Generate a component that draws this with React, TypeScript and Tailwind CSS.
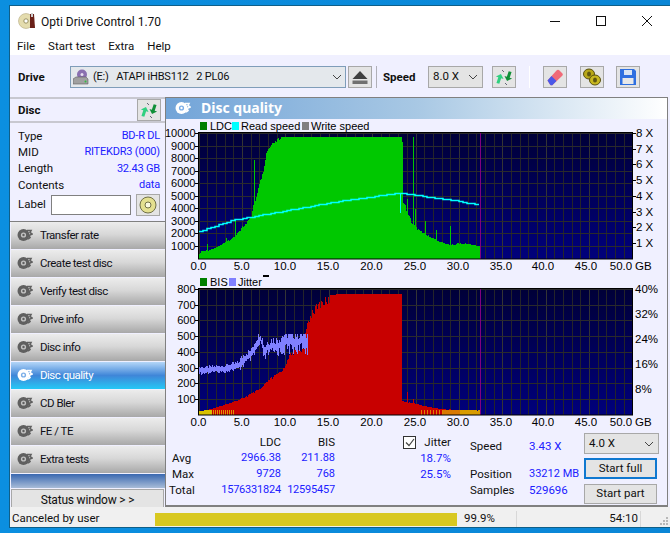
import type { ReactNode } from "react";

const PX_PER_GB = 8.68;
const X0 = 32.5;
const COLS = 282;

// fake-but-stable noise so the bars look like the measured data
const noise = (i: number) => {
  const s = Math.sin(i * 12.9898) * 43758.5453;
  return s - Math.floor(s);
};

const interp = (pts: number[][], x: number) => {
  for (let k = 1; k < pts.length; k++) {
    if (x <= pts[k][0]) {
      const [x0, y0] = pts[k - 1];
      const [x1, y1] = pts[k];
      return y0 + ((y1 - y0) * (x - x0)) / (x1 - x0 || 1);
    }
  }
  return pts[pts.length - 1][1];
};

const ldcEnv = [
  [0, 400], [0.3, 700], [1, 700], [2, 1000], [3, 1400], [4, 1800], [4.5, 2300], [5, 2700], [5.5, 3000],
  [6, 3500], [6.2, 4300], [6.5, 4800], [7, 6300], [7.4, 7000], [7.7, 8500], [8, 8900], [8.5, 9300], [9, 9600],
  [9.5, 9728], [23.3, 9728], [23.35, 5200], [24, 3800], [24.5, 3000], [25, 2600], [26, 2100], [27, 1700],
  [28, 1350], [29, 1200], [30, 1300], [31, 1250], [32, 1100], [32.45, 1050],
];
const ldcSpikes: Record<number, number> = { 55: 7900, 203: 9300, 214: 9700, 216: 4000, 226: 3000, 237: 2300, 251: 2600, 208: 4800, 8: 1200, 36: 3100, 27: 1700 };

const bisEnv = [
  [0, 25], [1, 35], [2, 50], [3, 70], [4, 90], [5, 110], [6, 140], [7, 170], [8, 230], [9, 270], [9.8, 310],
  [10.2, 380], [11, 420], [12, 440], [12.4, 600], [13, 680], [14, 740], [15, 760], [16, 768], [23.3, 768],
  [23.35, 90], [24, 85], [25, 72], [26, 60], [27, 46], [28, 38], [30, 33], [32.45, 30],
];

const speedEnv = [
  [0, 231], [1.5, 226.6], [3.8, 220], [9.6, 211], [15.3, 202], [21.1, 195], [23, 192.7], [25, 195], [30, 201], [32.3, 205],
];

const jitterEnv = [
  [0, 370], [3, 368], [4.5, 365], [5.2, 358], [6, 354], [6.5, 345], [7, 337], [7.5, 352], [8, 346], [9, 345], [10, 341], [12.5, 341],
];

const xLabels: [string, number][] = [
  ["0.0", 32.5], ["5.0", 75.7], ["10.0", 119], ["15.0", 162], ["20.0", 205.5], ["25.0", 249], ["30.0", 292],
  ["35.0", 335], ["40.0", 377], ["45.0", 420], ["50.0", 455],
];

function Plot({ hStep, hCount, children }: { hStep: number; hCount: number; children: ReactNode }) {
  const id = `sky${hCount}`;
  return (
    <>
      <defs>
        <linearGradient id={id} x1="0" y1="0" x2="0" y2="1">
          <stop offset="0" stopColor="#000038" />
          <stop offset="1" stopColor="#00007c" />
        </linearGradient>
      </defs>
      <rect x={X0} y={14} width={434} height={126} fill={`url(#${id})`} />
      {Array.from({ length: 50 }).map((_, i) => (
        <path key={i} d={`M${Math.round(X0 + i * PX_PER_GB) + 0.5} 14V140`} stroke={i % 5 === 0 ? "#343434" : "#24242a"} />
      ))}
      {Array.from({ length: hCount }).map((_, i) => (
        <path key={i} d={`M${X0} ${Math.round(14 + i * hStep) + 0.5}H466`} stroke="#2a2a2c" />
      ))}
      {children}
      <path d={`M${Math.round(X0 + 32.45 * PX_PER_GB) + 0.5} 14V140`} stroke="#800080" />
      <rect x={X0} y={13.5} width={434} height={126.5} fill="none" stroke="#000" />
      {xLabels.map(([t, x]) => (
        <text key={t} x={x} y={151} textAnchor="middle" fontSize={11.5}>{t}</text>
      ))}
      <text x={469} y={151} fontSize={11.5}>GB</text>
    </>
  );
}

function LdcChart() {
  const bars = Array.from({ length: COLS }).map((_, i) => {
    const gb = i / PX_PER_GB;
    let v = interp(ldcEnv, gb);
    if (v < 9700) v *= 1 - noise(i) * (gb > 6 && gb < 10 ? 0.03 : 0.09);
    if (ldcSpikes[i]) v = ldcSpikes[i];
    return `M${33 + i + 0.5} 140V${Math.round(140 - v * 0.01255)}`;
  }).join("");
  let speed = "";
  for (let i = 0; i < COLS - 2; i += 4) {
    const y = Math.round(interp(speedEnv, i / PX_PER_GB)) - 119 + 0.5;
    speed += `${i === 0 ? "M" : "V"}${i === 0 ? `33 ${y}` : y}H${33 + i + 4}`;
  }
  return (
    <svg width={502} height={156} className="block overflow-visible font-['Liberation_Sans',sans-serif]">
      <rect x={34} y={3} width={7} height={8} fill="#008000" />
      <text x={44} y={11} fontSize={11}>LDC</text>
      <rect x={66} y={3} width={7} height={8} fill="#00ffff" />
      <text x={75} y={11} fontSize={11}>Read speed</text>
      <rect x={136} y={3} width={7} height={8} fill="#808080" />
      <text x={145} y={11} fontSize={11}>Write speed</text>
      <Plot hStep={12.55} hCount={10}>
        <path d={bars} stroke="#00c800" />
        <path d={speed} stroke="#00ffff" strokeWidth={1.5} fill="none" />
        <path d="M234.5 74V94" stroke="#00ffff" />
      </Plot>
      {[10000, 9000, 8000, 7000, 6000, 5000, 4000, 3000, 2000, 1000].map((v) => {
        const y = 14 + (10000 - v) * 0.01255;
        return (
          <g key={v}>
            <path d={`M29 ${Math.round(y) + 0.5}H33`} stroke="#000" />
            <text x={29.5} y={y + 4} textAnchor="end" fontSize={11}>{v}</text>
          </g>
        );
      })}
      {[8, 7, 6, 5, 4, 3, 2, 1].map((v, i) => {
        const y = 14 + i * 15.72;
        return (
          <g key={v}>
            <path d={`M466 ${Math.round(y) + 0.5}H470`} stroke="#000" />
            <text x={470} y={y + 4} fontSize={11.5}>{v} X</text>
          </g>
        );
      })}
    </svg>
  );
}

function BisChart() {
  const bars: ReactNode[] = [];
  let red = "";
  for (let i = 0; i < COLS; i++) {
    const gb = i / PX_PER_GB;
    let v = interp(bisEnv, gb);
    if (v < 760) v *= 1 - noise(i + 7) * 0.08;
    if (i === 208) v = 145;
    if (i === 214) v = 100;
    const h = Math.round(v * 0.1573);
    red += `M${33 + i + 0.5} 140V${140 - h}`;
    let low = "";
    if (gb < 1.4) low = "#d8c000";
    else if (gb < 4 && i % 2 === 0) low = "#e09000";
    else if (gb > 25.5 && gb < 28 && i % 3 === 0) low = "#e08000";
    else if (gb >= 28 && gb < 30) low = "#d87800";
    else if (gb >= 30) low = "#d89c00";
    if (low) {
      const lh = Math.min(h, 5);
      bars.push(<path key={i} d={`M${33 + i + 0.5} 140V${140 - lh}`} stroke={low} />);
    }
  }
  let jitter = "";
  for (let i = 0; i < 109; i++) {
    const gb = i / PX_PER_GB;
    const c = interp(jitterEnv, gb) - 275;
    const spread = gb < 4.5 ? 3 : gb < 6 ? 6 : gb < 9 ? 9 : 12;
    const top = Math.max(c - 1 - noise(i + 3) * spread, 59);
    const bot = c + 1 + noise(i + 11) * spread;
    jitter += `M${33 + i + 0.5} ${Math.round(top)}V${Math.round(bot) + 1}`;
  }
  return (
    <svg width={502} height={155} className="block overflow-visible font-['Liberation_Sans',sans-serif]">
      <rect x={97} y={0} width={6} height={2} fill="#000" />
      <rect x={34} y={3} width={7} height={8} fill="#008000" />
      <text x={44} y={11} fontSize={11}>BIS</text>
      <rect x={63} y={3} width={7} height={8} fill="#8080ff" />
      <text x={72} y={11} fontSize={11}>Jitter</text>
      <Plot hStep={15.72} hCount={8}>
        <path d={red} stroke="#c80000" />
        {bars}
        <path d={jitter} stroke="#8080ff" />
      </Plot>
      {[800, 700, 600, 500, 400, 300, 200, 100].map((v) => {
        const y = 14 + (800 - v) * 0.1573;
        return (
          <g key={v}>
            <path d={`M29 ${Math.round(y) + 0.5}H33`} stroke="#000" />
            <text x={29.5} y={y + 4} textAnchor="end" fontSize={11}>{v}</text>
          </g>
        );
      })}
      {["40%", "32%", "24%", "16%", "8%"].map((t, i) => (
        <text key={t} x={469} y={18 + i * 25} fontSize={11.5}>{t}</text>
      ))}
    </svg>
  );
}

function DiscIcon({ light }: { light?: boolean }) {
  const c = light ? "#ffffff" : "#606060";
  const hole = light ? "#7aaee8" : "#c4c4c4";
  return (
    <svg width="16" height="14" viewBox="0 0 16 14">
      <circle cx="6.500" cy="7" r="6" fill={c} />
      <circle cx="6.500" cy="7" r="2.600" fill={hole} />
      <circle cx="6.500" cy="7" r="1.200" fill={c} />
      <path d="M10 2.500h4l-1 2 2 1.500-3 1.500 1 2-2 1.500" fill="none" stroke={c} strokeWidth="1.600" />
    </svg>
  );
}

function RefreshIcon() {
  return (
    <svg width="18" height="17" viewBox="0 0 18 17">
      <g transform="rotate(18 9 8.500)">
        <path d="M1 10l4-4 4 4H6.500v6h-3v-6z" fill="#30d080" />
        <path d="M17 7l-4 4-4-4h2.500V1h3v6z" fill="#109038" />
      </g>
      <path d="M7 1l2 2M10 14l2 2" stroke="#667" strokeWidth="1" />
    </svg>
  );
}

function ToolButton({ children, className = "" }: { children: ReactNode; className?: string }) {
  return (
    <div className={`flex h-[22px] w-[24px] shrink-0 items-center justify-center border border-[#a8a8a8] bg-[#e4e4e4] ${className}`}>
      {children}
    </div>
  );
}

function Chevron() {
  return (
    <svg width="10" height="6" viewBox="0 0 10 6" className="shrink-0">
      <path d="M1 1l4 4 4-4" fill="none" stroke="#444" />
    </svg>
  );
}

const sideButtons = ["Transfer rate", "Create test disc", "Verify test disc", "Drive info", "Disc info", "Disc quality", "CD Bler", "FE / TE", "Extra tests"];

function DiscRow({ label, value }: { label: string; value: string }) {
  return (
    <div className="flex h-[16.400px] items-center justify-between pl-2 pr-[5px]">
      <span>{label}</span>
      <span className="text-[11px] tracking-[-0.2px] text-[#2020ff]">{value}</span>
    </div>
  );
}

export default function App() {
  return (
    <div className="h-[533px] w-[670px] overflow-hidden bg-[linear-gradient(90deg,#0b8fe0,#0a86d6)] pl-[9px] pt-[5px] font-['Roboto',sans-serif] text-[11.500px] text-[#101010]">
      <div className="flex h-[523px] w-[661px] flex-col border border-r-0 border-[#0f5f88] bg-[#f0f0ff]">
        {/* title + menu */}
        <div className="bg-white">
          <div className="flex h-[29px] items-start justify-between">
            <div className="flex h-[29px] items-center gap-[5px] pl-[8px] pt-[1px] text-[12px]">
              <svg width="18" height="18" viewBox="0 0 18 18">
                <circle cx="8" cy="9" r="7.500" fill="#e4dcae" stroke="#a89c70" strokeWidth=".5" />
                <circle cx="8" cy="9" r="2.200" fill="#fff" stroke="#99905f" />
                <path d="M12 2h4l1 14h-5z" fill="#6a2018" />
                <path d="M13 1h2v4h-2z" fill="#cfcfcf" />
              </svg>
              <span className="pt-[2px]">Opti Drive Control 1.70</span>
            </div>
            <div className="flex">
              <div className="flex h-[29px] w-[46px] items-center justify-center">
                <svg width="10" height="10" viewBox="0 0 10 10"><path d="M0 5.500H10" stroke="#111" /></svg>
              </div>
              <div className="flex h-[29px] w-[46px] items-center justify-center">
                <svg width="10" height="10" viewBox="0 0 10 10"><rect x=".5" y=".5" width="9" height="9" fill="none" stroke="#111" /></svg>
              </div>
              <div className="flex h-[29px] w-[46px] items-center justify-center">
                <svg width="10" height="10" viewBox="0 0 10 10"><path d="M0 0L10 10M10 0L0 10" stroke="#111" /></svg>
              </div>
            </div>
          </div>
          <div className="flex h-[20px] items-center gap-[13px] pl-[7px] pt-[3px] text-[11.500px]">
            <span>File</span>
            <span>Start test</span>
            <span>Extra</span>
            <span>Help</span>
          </div>
        </div>

        {/* toolbar */}
        <div className="flex h-[42px] shrink-0 items-center pl-[8px] pt-[2px]">
          <span className="w-[52px] pt-[1px] font-bold">Drive</span>
          <div className="flex h-[22px] w-[276px] items-center justify-between border border-[#7f9db9] bg-[#e4e8ec] pl-[2px] pr-[3px]">
            <div className="flex items-center gap-[4px]">
              <svg width="16" height="16" viewBox="0 0 16 16">
                <circle cx="9" cy="5.500" r="5" fill="#8a70b0" />
                <circle cx="9" cy="5.500" r="1.500" fill="#e8e0f0" />
                <path d="M0 10l3-2h10l2 2v5H0z" fill="#a0a0a0" stroke="#606060" strokeWidth=".6" />
                <circle cx="12.500" cy="12.500" r="1" fill="#30c040" />
              </svg>
              <span className="whitespace-pre pt-[1px] text-[11px] tracking-[-0.2px]">(E:)   ATAPI iHBS112   2 PL06</span>
            </div>
            <Chevron />
          </div>
          <ToolButton className="ml-[2px]">
            <svg width="16" height="13" viewBox="0 0 16 13">
              <path d="M8 0l7.500 8H.5z" fill="#404040" />
              <rect x=".5" y="9.500" width="15" height="3.500" fill="#707070" />
            </svg>
          </ToolButton>
          <div className="ml-[4px] h-[22px] w-px bg-[#b0b0b8]" />
          <span className="ml-[6px] w-[45px] pt-[1px] font-bold">Speed</span>
          <div className="flex h-[22px] w-[55px] items-center justify-between border border-[#a8a8a8] bg-[#e4e4e4] px-1">
            <span>8.0 X</span>
            <Chevron />
          </div>
          <ToolButton className="ml-[9px]"><RefreshIcon /></ToolButton>
          <div className="ml-[13px] h-[22px] w-px bg-white" />
          <ToolButton className="ml-[13px]">
            <svg width="18" height="18" viewBox="0 0 18 18">
              <path d="M1.500 12.500L10.500 2.500a2 2 0 0 1 3 0l2.500 2.500a2 2 0 0 1 0 3L7 16.500a2 2 0 0 1-3 0z" fill="#f06a78" />
              <path d="M1.500 12.500L5.500 8l5 5L7 16.500a2 2 0 0 1-3 0z" fill="#4a58e8" />
            </svg>
          </ToolButton>
          <ToolButton className="ml-[13px]">
            <svg width="20" height="18" viewBox="0 0 20 18">
              <ellipse cx="7" cy="6" rx="5.500" ry="5" fill="#b8a818" stroke="#585010" />
              <ellipse cx="13" cy="12" rx="5.500" ry="5" fill="#c8b820" stroke="#585010" />
              <ellipse cx="7" cy="6" rx="2" ry="2.500" fill="#605810" />
              <ellipse cx="13" cy="12" rx="2" ry="2.500" fill="#605810" />
            </svg>
          </ToolButton>
          <ToolButton className="ml-[12px]">
            <svg width="18" height="18" viewBox="0 0 18 18">
              <path d="M1 1h14l2 2v14H1z" fill="#2f6fe0" />
              <rect x="5" y="2" width="8" height="5" fill="#d8e4f4" />
              <rect x="3.500" y="10" width="11" height="6" fill="#e8e8e8" />
            </svg>
          </ToolButton>
        </div>

        {/* body */}
        <div className="flex min-h-0 flex-1">
          <div className="flex w-[155px] shrink-0 flex-col">
            <div className="flex h-[27px] items-center justify-between border-y-2 border-y-[#c8c8d0] pl-2 pr-[4px]">
              <span className="pt-[1px] font-bold">Disc</span>
              <ToolButton><RefreshIcon /></ToolButton>
            </div>
            <div className="pt-[5px]">
              <DiscRow label="Type" value="BD-R DL" />
              <DiscRow label="MID" value="RITEKDR3 (000)" />
              <DiscRow label="Length" value="32.43 GB" />
              <DiscRow label="Contents" value="data" />
              <div className="flex h-[21px] items-center pl-2 pr-[5px] pt-[1px]">
                <span className="w-[33px] pt-[1px]">Label</span>
                <div className="h-[20px] w-[81px] border border-[#808080] bg-white" />
                <ToolButton className="ml-[5px]">
                  <svg width="18" height="18" viewBox="0 0 18 18">
                    <circle cx="9" cy="9" r="8" fill="#e4e090" stroke="#707048" />
                    <circle cx="9" cy="9" r="3" fill="#fafae0" stroke="#707048" />
                  </svg>
                </ToolButton>
              </div>
            </div>
            <div className="mt-[6px] flex flex-col gap-px border-t border-[#808080] pl-px text-[11.500px] tracking-[-0.5px]">
              {sideButtons.map((b) => {
                const on = b === "Disc quality";
                return (
                  <div
                    key={b}
                    className={
                      on
                        ? "flex h-[27px] items-center gap-[7px] bg-[linear-gradient(180deg,#b4d6f8_0%,#3f86d8_50%,#25c8f6_100%)] pl-[6px] text-white"
                        : "flex h-[27px] items-center gap-[7px] bg-[linear-gradient(180deg,#ececec_0%,#d8d8d8_45%,#a8a8a8_100%)] pl-[6px] text-[#101018]"
                    }
                  >
                    <DiscIcon light={on} />
                    <span className="pt-[2px]">{b}</span>
                  </div>
                );
              })}
              <div className="h-[14px] bg-[linear-gradient(180deg,#3a68b0,#a8bcd8)]" />
            </div>
            <div className="ml-px mt-[1px] flex h-[21px] w-[153px] items-center justify-center border border-[#a8a8a8] bg-[#e4e4e4] pt-[1px] text-[12px] tracking-[-0.2px]">
              Status window &gt; &gt;
            </div>
          </div>

          <div className="mr-[2px] flex min-w-0 flex-1 flex-col border border-b-2 border-[#808080]">
            <div className="flex h-[21px] shrink-0 items-center gap-[10px] bg-[linear-gradient(90deg,#72a4d8,#a8c8e4_50%,#ffffff)] pb-[2px] pl-[9px] font-['Noto_Sans',sans-serif] text-[14px] font-bold text-white">
              <DiscIcon light />
              <span>Disc quality</span>
            </div>
            <LdcChart />
            <BisChart />
            <div className="flex flex-1 pl-[3px] pt-[1px]">
              <div className="mt-[3.500px] grid h-[64px] w-[166px] grid-cols-[30px_82px_54px] grid-rows-4 items-center text-right">
                <span />
                <span>LDC</span>
                <span>BIS</span>
                <span className="pl-[3px] text-left">Avg</span>
                <span className="text-[11px] text-[#2020ff]">2966.38</span>
                <span className="text-[11px] text-[#2020ff]">211.88</span>
                <span className="pl-[3px] text-left">Max</span>
                <span className="text-[11px] text-[#2020ff]">9728</span>
                <span className="text-[11px] text-[#2020ff]">768</span>
                <span className="text-left">Total</span>
                <span className="text-[11px] tracking-[-0.2px] text-[#2020ff]">1576331824</span>
                <span className="text-[11px] tracking-[-0.2px] text-[#2020ff]">12595457</span>
              </div>
              <div className="ml-[68px] mt-[3.500px] grid h-[64px] w-[48px] grid-rows-4 items-center text-right">
                <div className="flex items-center justify-between">
                  <span className="flex h-[13px] w-[13px] items-center justify-center border border-[#333] bg-white">
                    <svg width="10" height="9" viewBox="0 0 10 9"><path d="M1 4.500l3 3 5-6.500" fill="none" stroke="#444" strokeWidth="1.200" /></svg>
                  </span>
                  <span>Jitter</span>
                </div>
                <span className="text-[#2020ff]">18.7%</span>
                <span className="text-[#2020ff]">25.5%</span>
              </div>
              <div className="ml-[19px] mt-[7.500px] grid h-[60px] w-[115px] grid-cols-[59px_56px] grid-rows-[16px_12px_16px_16px] content-start items-center">
                <span>Speed</span>
                <span className="whitespace-nowrap text-[#2020ff]">3.43 X</span>
                <span />
                <span />
                <span>Position</span>
                <span className="whitespace-nowrap text-[11px] text-[#2020ff]">33212 MB</span>
                <span>Samples</span>
                <span className="text-[#2020ff]">529696</span>
              </div>
              <div className="ml-[-1px] flex w-[76px] flex-col pt-[2px]">
                <div className="flex h-[21px] w-[75px] items-center justify-between border border-[#a8a8a8] bg-[#e4e4e4] px-1">
                  <span>4.0 X</span>
                  <Chevron />
                </div>
                <div className="mt-[4px] flex h-[21px] w-[73px] items-center justify-center border-2 border-[#0f78d0] bg-[#e4e4e4]">Start full</div>
                <div className="mt-[5px] flex h-[20px] w-[73px] items-center justify-center border border-[#a8a8a8] bg-[#e4e4e4]">Start part</div>
              </div>
            </div>
          </div>
        </div>

        {/* status bar */}
        <div className="flex h-[20px] shrink-0 items-center bg-[#f0f0f0] pt-[4px]">
          <span className="w-[145px] pl-[2px]">Canceled by user</span>
          <div className="h-[13px] w-[302px] bg-[#d8c820]" />
          <div className="ml-[1px] flex h-full w-[59px] items-center border-r border-[#d8d8d8] pl-[6px]">99.9%</div>
          <div className="flex h-full w-[124px] items-center justify-end border-r border-[#d8d8d8] pr-[2px]">54:10</div>
          <svg width="12" height="12" viewBox="0 0 12 12" className="ml-auto mr-[1px] self-end">
            <path d="M9 2h2v2H9zM6 5h2v2H6zM9 5h2v2H9zM3 8h2v2H3zM6 8h2v2H6zM9 8h2v2H9z" fill="#b8b8b8" />
          </svg>
        </div>
      </div>
    </div>
  );
}
